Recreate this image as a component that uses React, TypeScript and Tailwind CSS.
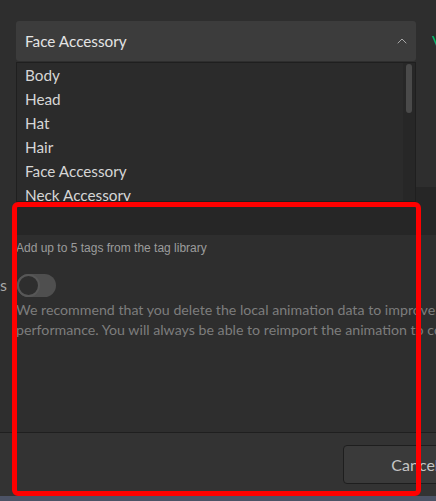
import { ChevronUp } from "lucide-react";

const parts = ["Body", "Head", "Hat", "Hair", "Face Accessory", "Neck Accessory", "Back Accessory", "Waist Accessory"];

export default function App() {
  return (
    <div
      className="relative w-[436px] h-[501px] overflow-hidden bg-[#2e2e2e]"
      style={{ fontFamily: "Lato, 'Noto Sans', sans-serif" }}
    >
      <div className="flex flex-col w-[560px] h-full">
        <div className="flex-1 flex flex-col pt-[21px]">
          {/* part selector */}
          <div className="flex items-center pl-4 gap-4">
            <div className="w-[400px] h-10 rounded-[3px] bg-[#3c3c3c] flex items-center justify-between pl-[9px] pr-[6px]">
              <span className="text-[15.3px] text-[#e4e4e4]">Face Accessory</span>
              <ChevronUp size={16} strokeWidth={1.5} className="text-[#a8a8a8]" />
            </div>
            <span className="text-[16px] text-[#00b86b]">Verify</span>
          </div>

          {/* tags input */}
          <div className="h-12 mt-[126px] ml-4 bg-[#262626]" />
          <p
            className="mt-[6px] pl-4 text-[12px] leading-[14px] text-[#9c9c9c]"
            style={{ fontFamily: "'Liberation Sans', Arial, sans-serif" }}
          >
            Add up to 5 tags from the tag library
          </p>

          <div className="flex items-center mt-[18px] h-6">
            <span className="w-[17px] text-[16px] text-[#a8a8a8] text-right pr-[11px] overflow-hidden">s</span>
            <div className="w-[39px] h-[23px] rounded-full bg-[#4f4f4f] flex items-center">
              <div className="w-[23px] h-[23px] rounded-full bg-[#2e2e2e] border-2 border-[#575757]" />
            </div>
          </div>
          <p className="pl-4 mt-[3px] text-[14.2px] leading-5 text-[#7d7d7d] whitespace-nowrap">
            We recommend that you delete the local animation data to improve your
            <br />
            performance. You will always be able to reimport the animation to continue editing.
          </p>
        </div>

        {/* footer */}
        <div className="h-[64px] border-t border-[#1f1f1f] bg-[#333333] flex items-start pt-[12px] pl-[343px]">
          <button className="w-[144px] h-[39px] rounded-[4px] border border-[#1e1e1e] bg-[#3a3a3a] text-[16px] text-[#c4c4c4]">
            Cancel
          </button>
        </div>
        <div className="h-[5px] bg-[#4c5366]" />
      </div>

      {/* open dropdown list */}
      <div className="absolute left-4 top-[62px] w-[400px] h-[140px] border border-[#1f1f1f] bg-[#2b2b2b] overflow-hidden flex">
        <ul className="flex-1">
          {parts.map((p) => (
            <li key={p} className="h-6 leading-6 pl-2 text-[15.3px] text-[#d6d6d6]">
              {p}
            </li>
          ))}
        </ul>
        <div className="w-[12px] bg-[#272727] flex justify-center pt-[1px]">
          <div className="w-[6px] h-[49px] rounded-full bg-[#4a4a4a]" />
        </div>
      </div>

      {/* highlight frame */}
      <div className="absolute left-[12px] top-[202px] w-[409px] h-[294px] rounded-[6px] border-[5px] border-[#ff0000]" />
    </div>
  );
}
